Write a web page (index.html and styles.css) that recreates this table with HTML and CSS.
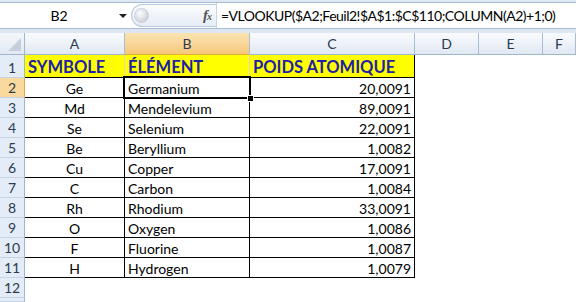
FILE: index.html
```html
<!DOCTYPE html>
<html>
<head>
<meta charset="utf-8">
<link rel="stylesheet" href="styles.css">
</head>
<body>
<div class="app">
  <div class="topbar">
    <div class="fbar">
      <div class="namebox"><span class="ref">B2</span><span class="arrow"></span></div>
      <div class="pill"><span class="knob"></span><span class="fx">f<sub>x</sub></span></div>
      <div class="formula">=VLOOKUP($A2;Feuil2!$A$1:$C$110;COLUMN(A2)+1;0)</div>
    </div>
  </div>
  <div class="sheet">
    <div class="corner"><span class="tri"></span></div>
    <div class="ch">A</div>
    <div class="ch sel">B</div>
    <div class="ch">C</div>
    <div class="ch">D</div>
    <div class="ch">E</div>
    <div class="ch">F</div>

    <div class="rh r1">1</div>
    <div class="c h1 ca">SYMBOLE</div>
    <div class="c h1 cb">ÉLÉMENT</div>
    <div class="c h1 cc">POIDS ATOMIQUE</div>
    <div class="c"></div><div class="c"></div><div class="c"></div>

    <div class="rh sel">2</div>
    <div class="c d ctr">Ge</div><div class="c d active">Germanium<span class="handle"></span></div><div class="c d rt">20,0091</div>
    <div class="c"></div><div class="c"></div><div class="c"></div>

    <div class="rh">3</div>
    <div class="c d ctr">Md</div><div class="c d">Mendelevium</div><div class="c d rt">89,0091</div>
    <div class="c"></div><div class="c"></div><div class="c"></div>

    <div class="rh">4</div>
    <div class="c d ctr">Se</div><div class="c d">Selenium</div><div class="c d rt">22,0091</div>
    <div class="c"></div><div class="c"></div><div class="c"></div>

    <div class="rh">5</div>
    <div class="c d ctr">Be</div><div class="c d">Beryllium</div><div class="c d rt">1,0082</div>
    <div class="c"></div><div class="c"></div><div class="c"></div>

    <div class="rh">6</div>
    <div class="c d ctr">Cu</div><div class="c d">Copper</div><div class="c d rt">17,0091</div>
    <div class="c"></div><div class="c"></div><div class="c"></div>

    <div class="rh">7</div>
    <div class="c d ctr">C</div><div class="c d">Carbon</div><div class="c d rt">1,0084</div>
    <div class="c"></div><div class="c"></div><div class="c"></div>

    <div class="rh">8</div>
    <div class="c d ctr">Rh</div><div class="c d">Rhodium</div><div class="c d rt">33,0091</div>
    <div class="c"></div><div class="c"></div><div class="c"></div>

    <div class="rh">9</div>
    <div class="c d ctr">O</div><div class="c d">Oxygen</div><div class="c d rt">1,0086</div>
    <div class="c"></div><div class="c"></div><div class="c"></div>

    <div class="rh">10</div>
    <div class="c d ctr">F</div><div class="c d">Fluorine</div><div class="c d rt">1,0087</div>
    <div class="c"></div><div class="c"></div><div class="c"></div>

    <div class="rh">11</div>
    <div class="c d ctr">H</div><div class="c d">Hydrogen</div><div class="c d rt">1,0079</div>
    <div class="c"></div><div class="c"></div><div class="c"></div>

    <div class="rh">12</div>
    <div class="c"></div><div class="c"></div><div class="c"></div>
    <div class="c"></div><div class="c"></div><div class="c"></div>

    <div class="rh"></div>
    <div class="c"></div><div class="c"></div><div class="c"></div>
    <div class="c"></div><div class="c"></div><div class="c"></div>
  </div>
</div>
</body>
</html>
```

FILE: styles.css
```css
html, body {
  margin: 0;
  padding: 0;
  background: #ffffff;
}
body {
  width: 576px;
  height: 302px;
  overflow: hidden;
  font-family: Lato, "Open Sans", sans-serif;
  font-size: 14px;
  color: #000;
}
.app {
  display: flex;
  flex-direction: column;
}
.topbar {
  height: 33px;
  box-sizing: border-box;
  background: #dde7f3;
  padding-top: 2px;
  padding-bottom: 4px;
}
.fbar {
  height: 27px;
  box-sizing: border-box;
  background: #fff;
  border-top: 1px solid #a7bbd3;
  border-bottom: 1px solid #a7bbd3;
  display: flex;
  align-items: center;
}
.namebox {
  flex: 0 0 131px;
  height: 100%;
  display: flex;
  align-items: center;
}
.ref {
  width: 118px;
  text-align: center;
  font-size: 14px;
}
.arrow {
  width: 0;
  height: 0;
  border-left: 4px solid transparent;
  border-right: 4px solid transparent;
  border-top: 4px solid #222;
  margin-left: 1px;
}
.pill {
  flex: 0 0 85px;
  height: 23px;
  box-sizing: border-box;
  border: 1px solid #b9c9dc;
  border-right: none;
  border-radius: 12px 0 0 12px;
  background: linear-gradient(#fbfcfe, #e6edf6);
  display: flex;
  align-items: center;
  justify-content: space-between;
  padding: 0 5px 0 2px;
}
.knob {
  width: 15px;
  height: 15px;
  border-radius: 50%;
  background: radial-gradient(circle at 40% 35%, #ffffff 0%, #dfe3e8 45%, #b9c0c9 100%);
  border: 1px solid #c9d1db;
  box-sizing: border-box;
}
.fx {
  font-family: "Liberation Serif", serif;
  font-style: italic;
  font-weight: bold;
  font-size: 15px;
  color: #555;
  letter-spacing: -1px;
}
.fx sub {
  font-size: 10px;
  vertical-align: 0;
}
.formula {
  height: 100%;
  border-left: 1px solid #c5d3e3;
  padding-left: 4px;
  display: flex;
  align-items: center;
  flex: 1 1 auto;
  min-width: 0;
  overflow: hidden;
  font-size: 14px;
  letter-spacing: -0.5px;
  white-space: nowrap;
}
.sheet {
  display: grid;
  grid-template-columns: 25px 100px 125px 165px 64px 64px 1fr;
  grid-template-rows: 22px 23px repeat(11, 20px) 4px;
}
.corner {
  background: linear-gradient(#f4f7fb, #e2e9f3);
  border-right: 1px solid #9eb6ce;
  border-bottom: 1px solid #9eb6ce;
  position: relative;
}
.tri {
  position: absolute;
  right: 3px;
  bottom: 3px;
  width: 0;
  height: 0;
  border-left: 13px solid transparent;
  border-bottom: 13px solid #c4cfdc;
}
.ch {
  background: linear-gradient(#f9fbfd 0%, #eef2f8 50%, #e0e8f2 100%);
  border-right: 1px solid #a8bdd4;
  border-bottom: 1px solid #9eb6ce;
  display: flex;
  align-items: center;
  justify-content: center;
  font-size: 14px;
  color: #283a52;
}
.ch.sel {
  background: linear-gradient(#fbe3b0 0%, #f9d79a 50%, #f5c777 100%);
  border-bottom-color: #e8a93f;
}
.rh {
  background: #e4ecf7;
  border-right: 1px solid #9eb6ce;
  border-bottom: 1px solid #c5d3e3;
  display: flex;
  align-items: center;
  justify-content: center;
  font-size: 14px;
  color: #2c3c50;
  box-sizing: border-box;
}
.rh.r1 {
  padding-top: 2px;
}
.rh.sel {
  background: #f9d99d;
  border-right-color: #e8a93f;
}
.c {
  border-right: 1px solid transparent;
  border-bottom: 1px solid transparent;
  display: flex;
  align-items: center;
  white-space: nowrap;
  overflow: visible;
  padding: 0 3px;
  box-sizing: border-box;
}
.h1 {
  background: #ffff00;
  border-right-color: #dcdcb8;
  border-bottom-color: #000;
  font-weight: bold;
  font-size: 16.5px;
  color: #2121a6;
  padding-top: 2px;
}
.h1.cc {
  border-right-color: #000;
}
.d {
  border-right-color: #000;
  border-bottom-color: #000;
  padding-top: 1px;
}
.ctr {
  justify-content: center;
}
.rt {
  justify-content: flex-end;
}
.active {
  position: relative;
}
.active::after {
  content: "";
  position: absolute;
  left: -2px;
  top: -2px;
  right: -2px;
  bottom: -2px;
  border: 2px solid #000;
  box-shadow: inset 0 0 0 1px #fff;
  pointer-events: none;
}
.handle {
  position: absolute;
  right: -5px;
  bottom: -5px;
  width: 5px;
  height: 5px;
  background: #000;
  border: 1px solid #fff;
  z-index: 2;
}
```
